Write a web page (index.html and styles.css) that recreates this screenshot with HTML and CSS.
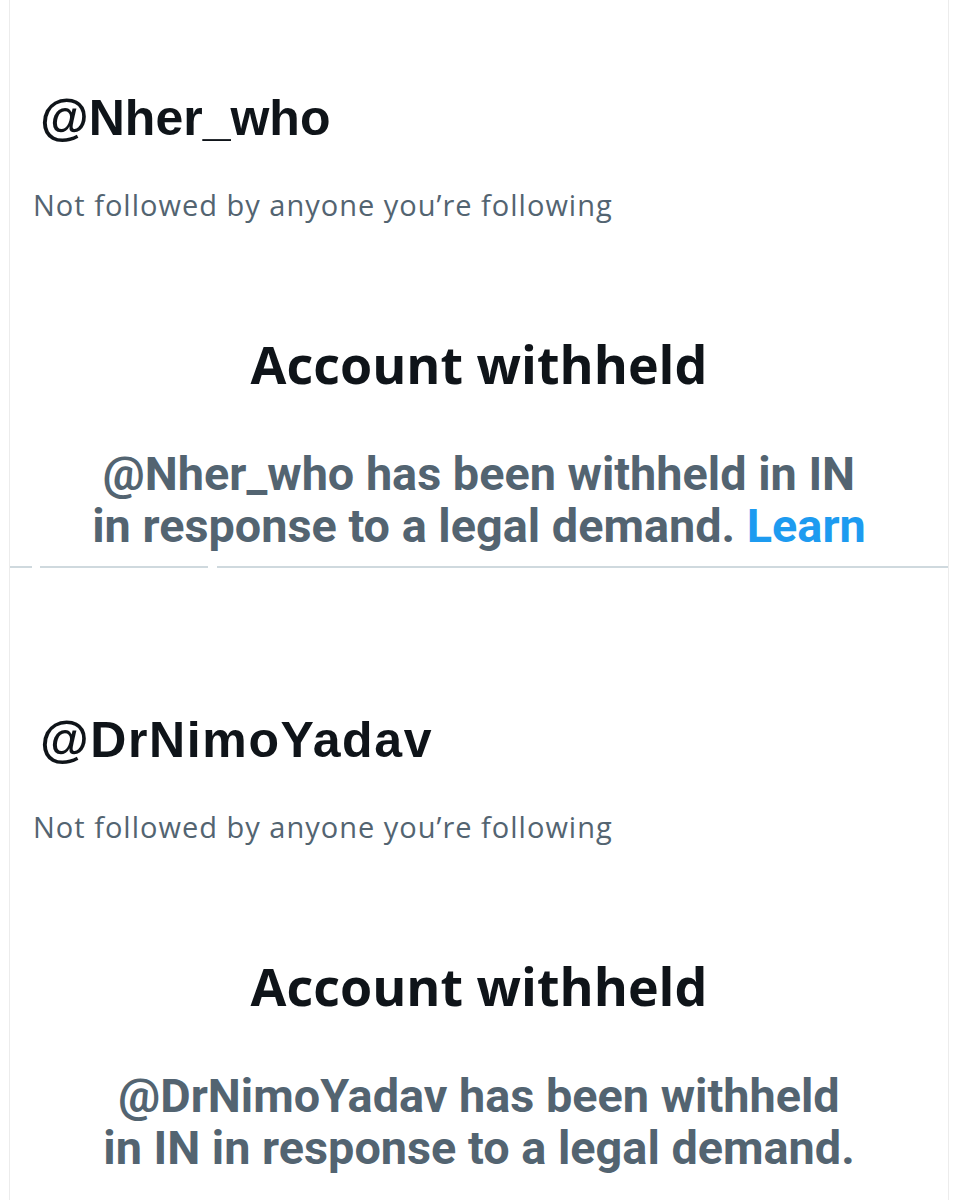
FILE: index.html
```html
<!DOCTYPE html>
<html lang="en">
<head>
<meta charset="utf-8">
<title>Account withheld</title>
<link rel="stylesheet" href="styles.css">
</head>
<body>
<main class="frame">
  <section class="panel panel-top">
    <h1 class="handle">@Nher_who</h1>
    <p class="followers">Not followed by anyone you’re following</p>
    <h2 class="title">Account withheld</h2>
    <p class="notice">@Nher_who has been withheld in IN<br>in response to a legal demand. <a class="learn" href="#">Learn</a></p>
  </section>
  <div class="divider">
    <span class="seg seg-a"></span>
    <span class="seg seg-b"></span>
    <span class="seg seg-c"></span>
  </div>
  <section class="panel panel-bottom">
    <h1 class="handle handle-wide">@DrNimoYadav</h1>
    <p class="followers">Not followed by anyone you’re following</p>
    <h2 class="title">Account withheld</h2>
    <p class="notice">@DrNimoYadav has been withheld<br>in IN in response to a legal demand.</p>
  </section>
</main>
</body>
</html>
```
FILE: styles.css
```css
html, body {
  margin: 0;
  padding: 0;
  background: #ffffff;
}

.frame {
  margin-left: 9px;
  width: 940px;
  box-sizing: border-box;
  border-left: 1px solid #ececec;
  border-right: 1px solid #ececec;
  min-height: 1200px;
}

.panel {
  display: flex;
  flex-direction: column;
}

.panel-top {
  height: 566px;
  padding-top: 88px;
  box-sizing: border-box;
  overflow: hidden;
}

.panel-bottom {
  padding-top: 142px;
}

.handle {
  margin: 0 0 0 30px;
  font-family: "Liberation Sans", Arial, sans-serif;
  font-weight: 700;
  font-size: 50px;
  line-height: 60px;
  color: #0f1419;
}

.handle-wide {
  letter-spacing: 1.6px;
}

.followers {
  margin: 38px 0 0 23px;
  font-family: "Open Sans", sans-serif;
  font-weight: 400;
  font-size: 29px;
  line-height: 38px;
  letter-spacing: 1px;
  color: #536471;
}

.title {
  margin: 108px 0 0 0;
  text-align: center;
  font-family: "Open Sans", sans-serif;
  font-weight: 700;
  font-size: 52px;
  line-height: 64px;
  color: #0f1419;
}

.notice {
  margin: 52px 0 0 0;
  text-align: center;
  font-family: Roboto, sans-serif;
  font-weight: 700;
  font-size: 46.8px;
  line-height: 52px;
  color: #536471;
}

.learn {
  color: #1d9bf0;
  text-decoration: none;
}

.divider {
  display: flex;
  height: 2px;
}

.seg {
  height: 2px;
  background: #cfd9de;
}

.seg-a {
  width: 22px;
}

.seg-b {
  width: 168px;
  margin-left: 8px;
}

.seg-c {
  flex: 1;
  margin-left: 9px;
}
```
